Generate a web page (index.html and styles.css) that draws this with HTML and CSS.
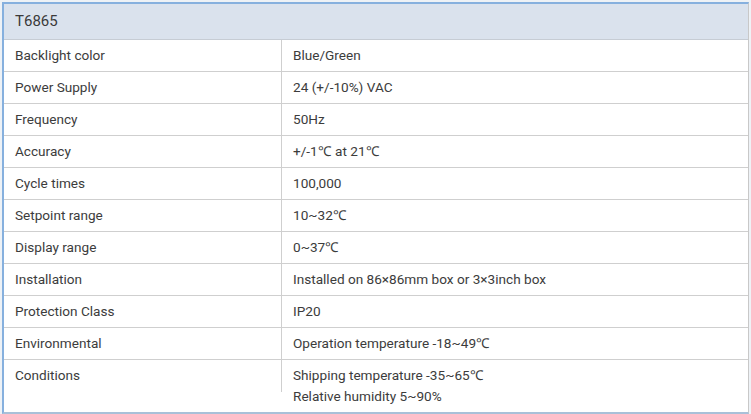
FILE: index.html
```html
<!DOCTYPE html>
<html>
<head>
<meta charset="utf-8">
<link rel="stylesheet" href="styles.css">
</head>
<body>
<div class="page">
  <div class="spec">
    <div class="spec-head">T6865</div>
    <div class="spec-grid">
      <div class="cell key">Backlight color</div><div class="cell val">Blue/Green</div>
      <div class="cell key">Power Supply</div><div class="cell val">24 (+/-10%) VAC</div>
      <div class="cell key">Frequency</div><div class="cell val">50Hz</div>
      <div class="cell key">Accuracy</div><div class="cell val">+/-1℃ at 21℃</div>
      <div class="cell key">Cycle times</div><div class="cell val">100,000</div>
      <div class="cell key">Setpoint range</div><div class="cell val">10~32℃</div>
      <div class="cell key">Display range</div><div class="cell val">0~37℃</div>
      <div class="cell key">Installation</div><div class="cell val">Installed on 86×86mm box or 3×3inch box</div>
      <div class="cell key">Protection Class</div><div class="cell val">IP20</div>
      <div class="cell key">Environmental</div><div class="cell val">Operation temperature -18~49℃</div>
      <div class="cell key last">Conditions</div><div class="cell val last">Shipping temperature -35~65℃<br>Relative humidity 5~90%</div>
    </div>
  </div>
</div>
</body>
</html>
```

FILE: styles.css
```css
html, body {
  margin: 0;
  padding: 0;
  background: #eef2f6;
}
.page {
  padding: 2px 2px 0 2px;
  width: 751px;
  height: 414px;
  box-sizing: border-box;
}
.spec {
  box-sizing: border-box;
  width: 747px;
  height: 412px;
  background: #fff;
  border-top: 2px solid #86b0de;
  border-left: 2px solid #86b0de;
  border-bottom: 2px solid #a9c0d8;
  border-right: 1px solid #c8c8c8;
  font-family: Roboto, "Liberation Sans", Arial, sans-serif;
  color: #3c3c3c;
  display: flex;
  flex-direction: column;
}
.spec-head {
  height: 35px;
  background: #dae2ed;
  border-bottom: 1px solid #c6ccd4;
  font-size: 15px;
  line-height: 35px;
  padding-left: 11px;
  color: #3a3a3a;
}
.spec-grid {
  display: grid;
  grid-template-columns: 278px 1fr;
  font-size: 13.6px;
  flex: 1;
  grid-auto-rows: 32px;
}
.cell {
  border-bottom: 1px solid #cfcfcf;
  padding-left: 11px;
  line-height: 31px;
  white-space: nowrap;
}
.key {
  border-right: 1px solid #cfcfcf;
}
.cell.last {
  border-bottom: none;
  line-height: 21px;
  padding-top: 5px;
}
```
